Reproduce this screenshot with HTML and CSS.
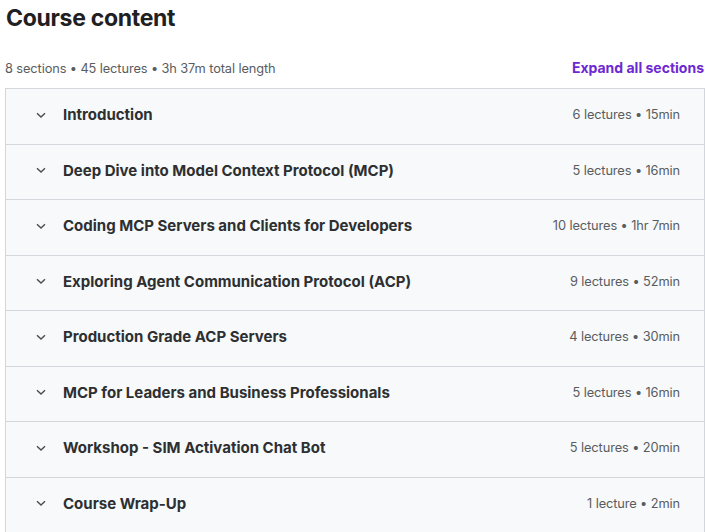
FILE: index.html
```html
<!DOCTYPE html>
<html>
<head>
<meta charset="utf-8">
<link rel="stylesheet" href="styles.css">
</head>
<body>
<div class="page">
  <h2 class="title">Course content</h2>
  <div class="meta">
    <span class="stats">8 sections • 45 lectures • 3h 37m total length</span>
    <button class="expand">Expand all sections</button>
  </div>
  <div class="sections">
    <div class="row"><svg class="chev" viewBox="0 0 12 8"><path d="M2 2.2 L6 6 L10 2.2" fill="none" stroke="#2d2f31" stroke-width="1.4"/></svg><span class="name">Introduction</span><span class="info">6 lectures • 15min</span></div>
    <div class="row"><svg class="chev" viewBox="0 0 12 8"><path d="M2 2.2 L6 6 L10 2.2" fill="none" stroke="#2d2f31" stroke-width="1.4"/></svg><span class="name">Deep Dive into Model Context Protocol (MCP)</span><span class="info">5 lectures • 16min</span></div>
    <div class="row"><svg class="chev" viewBox="0 0 12 8"><path d="M2 2.2 L6 6 L10 2.2" fill="none" stroke="#2d2f31" stroke-width="1.4"/></svg><span class="name">Coding MCP Servers and Clients for Developers</span><span class="info">10 lectures • 1hr 7min</span></div>
    <div class="row"><svg class="chev" viewBox="0 0 12 8"><path d="M2 2.2 L6 6 L10 2.2" fill="none" stroke="#2d2f31" stroke-width="1.4"/></svg><span class="name">Exploring Agent Communication Protocol (ACP)</span><span class="info">9 lectures • 52min</span></div>
    <div class="row"><svg class="chev" viewBox="0 0 12 8"><path d="M2 2.2 L6 6 L10 2.2" fill="none" stroke="#2d2f31" stroke-width="1.4"/></svg><span class="name">Production Grade ACP Servers</span><span class="info">4 lectures • 30min</span></div>
    <div class="row"><svg class="chev" viewBox="0 0 12 8"><path d="M2 2.2 L6 6 L10 2.2" fill="none" stroke="#2d2f31" stroke-width="1.4"/></svg><span class="name">MCP for Leaders and Business Professionals</span><span class="info">5 lectures • 16min</span></div>
    <div class="row"><svg class="chev" viewBox="0 0 12 8"><path d="M2 2.2 L6 6 L10 2.2" fill="none" stroke="#2d2f31" stroke-width="1.4"/></svg><span class="name">Workshop - SIM Activation Chat Bot</span><span class="info">5 lectures • 20min</span></div>
    <div class="row"><svg class="chev" viewBox="0 0 12 8"><path d="M2 2.2 L6 6 L10 2.2" fill="none" stroke="#2d2f31" stroke-width="1.4"/></svg><span class="name">Course Wrap-Up</span><span class="info">1 lecture • 2min</span></div>
  </div>
</div>
</body>
</html>
```
FILE: styles.css
```css
* { box-sizing: border-box; }
body {
  margin: 0;
  background: #ffffff;
  font-family: Inter, "Noto Sans", sans-serif;
  color: #2d2f31;
}
.page {
  padding-left: 5px;
}
.title {
  margin: 0;
  padding: 4px 0 0 1px;
  font-size: 23px;
  font-weight: 700;
  line-height: 28px;
  letter-spacing: -0.3px;
  color: #1f2022;
}
.meta {
  display: flex;
  justify-content: space-between;
  align-items: center;
  margin-top: 24px;
  margin-bottom: 8px;
  height: 24px;
}
.stats {
  font-size: 12.8px;
  letter-spacing: -0.1px;
  color: #595c5f;
}
.expand {
  border: none;
  background: none;
  padding: 0;
  margin-right: 1px;
  margin-top: -2px;
  font-family: inherit;
  font-size: 14px;
  font-weight: 700;
  color: #6d28d2;
}
.sections {
  border: 1px solid #d1d7dc;
  border-bottom: none;
}
.row {
  display: flex;
  align-items: center;
  height: 55.5px;
  background: #f7f9fa;
  border-bottom: 1px solid #d1d7dc;
  padding: 0 24px 3px 29px;
}
.chev {
  width: 12px;
  height: 8px;
  flex: none;
  margin-right: 16px;
}
.chev path {
  stroke: #4a4d50;
}
.name {
  flex: 1;
  font-size: 15px;
  font-weight: 700;
  color: #2d2f31;
}
.info {
  font-size: 12.8px;
  letter-spacing: -0.1px;
  color: #595c5f;
}
```
